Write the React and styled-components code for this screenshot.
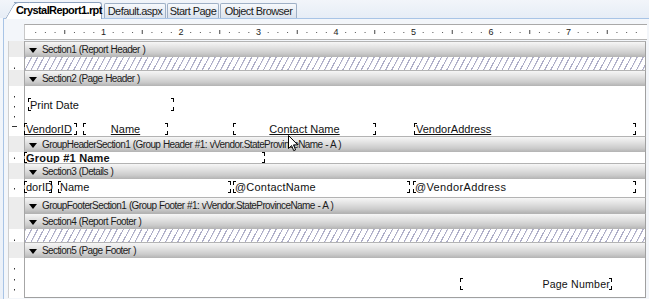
import React from 'react';
import styled, { createGlobalStyle } from 'styled-components';

const Global = createGlobalStyle`
  html, body { margin: 0; padding: 0; background: #eef2f8; overflow: hidden; }
  #root { width: 649px; height: 299px; }
`;

const Window = styled.div`
  position: relative;
  width: 649px;
  height: 299px;
  display: flex;
  flex-direction: column;
  overflow: hidden;
  background: linear-gradient(#f5f8fc, #eaf0f8);
  font-family: "Liberation Sans", Arial, sans-serif;
`;

const TabStrip = styled.div`
  flex: none;
  height: 18px;
  display: flex;
  align-items: flex-end;
  padding-left: 14px;
  gap: 1px;
  position: relative;
  z-index: 2;
  background: linear-gradient(#f2f5fa, #e6edf6);
`;

const ActiveTab = styled.div`
  position: relative;
  z-index: 1;
  width: ${p => p.$w}px;
  box-sizing: border-box;
  height: 17px;
  margin-bottom: -1px;
  margin-right: 1px;
  padding-left: 2px;
  background: #fff;
  border: 1px solid #8ea3bf;
  border-left: none;
  border-bottom: none;
  border-radius: 0 3px 0 0;
  font-weight: bold;
  font-size: 11px;
  letter-spacing: -0.6px;
  line-height: 15px;
  color: #000;
  white-space: nowrap;
  &::before {
    content: "";
    position: absolute;
    left: -9px;
    top: -1px;
    bottom: 0;
    width: 14px;
    background: #fff;
    border-left: 1px solid #8ea3bf;
    border-top: 1px solid #8ea3bf;
    border-top-left-radius: 4px;
    transform: skewX(-30deg);
    transform-origin: bottom left;
    z-index: -1;
  }
`;

const Tab = styled.div`
  width: ${p => p.$w}px;
  box-sizing: border-box;
  height: 15px;
  background: linear-gradient(#f7f9fc, #dae2ed);
  border: 1px solid #9fb0c6;
  border-bottom: none;
  border-radius: 2px 2px 0 0;
  font-size: 11px;
  letter-spacing: -0.55px;
  line-height: 14px;
  color: #1b1b1b;
  text-align: center;
  white-space: nowrap;
`;

const Frame = styled.div`
  flex: 1;
  min-height: 0;
  margin-left: 3px;
  border-top: 1px solid #a8c4e6;
  border-left: 1px solid #a8c4e6;
  background: #f3f6fa;
  display: flex;
  flex-direction: column;
`;

const TopRulerRow = styled.div`
  flex: none;
  height: 22px;
  display: flex;
  align-items: flex-start;
  padding-left: 20px;
`;

const RulerBox = styled.div`
  margin-top: 5px;
  width: 622px;
  height: 14px;
  box-sizing: content-box;
  background: #fff;
  border-top: 1px solid #a9a9a9;
  border-bottom: 1px solid #b5b5b5;
  border-left: 1px solid #c8c8c8;
  svg { display: block; }
`;

const Row = styled.div`
  flex: none;
  display: grid;
  grid-template-columns: 17px 621px;
  margin-left: 4px;
  height: ${p => p.$h}px;
`;

const RulerCell = styled.div`
  border-left: 1px solid #cfcfcf;
  border-right: 1px solid #a6a6a6;
  background: ${p => (p.$bar ? '#ececec' : '#fff')};
  svg { display: block; }
`;

const Bar = styled.div`
  position: relative;
  box-sizing: border-box;
  display: flex;
  align-items: center;
  gap: 5px;
  padding-left: 4px;
  border-top: 1px solid #b3b3b3;
  border-right: 1px solid #a0a0a0;
  background: linear-gradient(#f6f6f6 0%, #e3e3e3 35%, #cbcbcb 75%, #b3b3b3 100%);
  font-size: 10px;
  letter-spacing: -0.6px;
  word-spacing: 0.5px;
  color: #1c1c1c;
  white-space: nowrap;
`;

const Arrow = styled.span`
  width: 0;
  height: 0;
  border-left: 4px solid transparent;
  border-right: 4px solid transparent;
  border-top: 5px solid #000;
  margin-top: 1px;
`;

const Hatch = styled.div`
  border-right: 1px solid #a0a0a0;
  background: repeating-linear-gradient(118deg, #aeaec8 0px, #aeaec8 1px, #ffffff 1.3px, #ffffff 5.4px);
`;

const Canvas = styled.div`
  position: relative;
  background: #fff;
  border-right: 1px solid #a0a0a0;
  border-bottom: ${p => (p.$last ? '1px solid #a0a0a0' : 'none')};
`;

const FieldBox = styled.div`
  position: absolute;
  left: ${p => p.$x}px;
  top: ${p => p.$y}px;
  width: ${p => p.$w}px;
  height: ${p => p.$h}px;
  box-sizing: border-box;
  padding: 0 2px;
  display: flex;
  align-items: center;
  justify-content: ${p => (p.$align === 'center' ? 'center' : p.$align === 'right' ? 'flex-end' : 'flex-start')};
  font-size: ${p => p.$size || 11}px;
  font-weight: ${p => (p.$bold ? 'bold' : 'normal')};
  letter-spacing: ${p => p.$ls || 0}px;
  text-decoration: ${p => (p.$u ? 'underline' : 'none')};
  color: #111;
  white-space: nowrap;
`;

const Corner = styled.span`
  position: absolute;
  width: 2px;
  height: 3px;
  ${p => (p.$v === 't' ? 'top: 0;' : 'bottom: 0;')}
  ${p => (p.$h === 'l' ? 'left: 0;' : 'right: 0;')}
  ${p => (p.$v === 't' ? 'border-top: 1px solid #000;' : 'border-bottom: 1px solid #000;')}
  ${p => (p.$h === 'l' ? 'border-left: 1px solid #000;' : 'border-right: 1px solid #000;')}
`;

const CursorWrap = styled.div`
  position: absolute;
  left: 288px;
  top: 135px;
  z-index: 5;
  svg { display: block; }
`;

function Field({ f }) {
  return (
    <FieldBox $x={f.x} $y={f.y} $w={f.w} $h={f.h || 12} $align={f.align} $bold={f.bold} $u={f.u} $ls={f.ls} $size={f.size}>
      <Corner $v="t" $h="l" />
      <Corner $v="b" $h="l" />
      <Corner $v="t" $h="r" />
      <Corner $v="b" $h="r" />
      {f.text}
    </FieldBox>
  );
}

function TopRuler() {
  const step = 77.5 / 8;
  const items = [];
  for (let i = 1; i <= 64; i++) {
    const x = 1 + step * i;
    if (x > 620) break;
    if (i % 8 === 0) {
      items.push(
        <text key={i} x={x} y={10} fontSize="9" fontFamily="Liberation Sans, Arial, sans-serif" fill="#222" textAnchor="middle">
          {i / 8}
        </text>
      );
    } else if (i % 4 === 0) {
      items.push(<rect key={i} x={x - 0.5} y={5} width={1} height={4} fill="#444" />);
    } else {
      items.push(<rect key={i} x={x - 0.5} y={7} width={1} height={1} fill="#555" />);
    }
  }
  return (
    <svg width="622" height="14" viewBox="0 0 622 14">
      {items}
    </svg>
  );
}

function VMarks({ h, marks = [] }) {
  return (
    <svg width="15" height={h} viewBox={`0 0 15 ${h}`}>
      {marks.map((m, i) =>
        m.dash ? (
          <rect key={i} x={3} y={m.y} width={5} height={1} fill="#333" />
        ) : (
          <rect key={i} x={5} y={m.y} width={1} height={1.5} fill="#333" />
        )
      )}
    </svg>
  );
}

const rows = [
  { type: 'bar', label: 'Section1 (Report Header )' },
  { type: 'hatch', h: 13, marks: [{ y: 10.5 }] },
  { type: 'bar', label: 'Section2 (Page Header )' },
  {
    type: 'canvas', h: 50,
    marks: [{ y: 10 }, { y: 20 }, { y: 30 }, { y: 40, dash: true }],
    fields: [
      { x: 3, y: 12, w: 146, h: 13, text: 'Print Date' },
      { x: -1, y: 37, w: 53, text: 'VendorID', u: true },
      { x: 58, y: 37, w: 85, text: 'Name', u: true, align: 'center' },
      { x: 208, y: 37, w: 143, text: 'Contact Name', u: true, align: 'center' },
      { x: 389, y: 37, w: 222, text: 'VendorAddress', u: true },
    ],
  },
  { type: 'bar', label: 'GroupHeaderSection1 (Group Header #1: vVendor.StateProvinceName - A )' },
  {
    type: 'canvas', h: 11,
    marks: [{ y: 5.5 }],
    fields: [{ x: -1, y: 0, w: 241, h: 11, text: 'Group #1 Name', bold: true, ls: 0.2 }],
  },
  { type: 'bar', label: 'Section3 (Details )' },
  {
    type: 'canvas', h: 18,
    marks: [{ y: 9 }],
    fields: [
      { x: -1, y: 2, w: 28, text: 'dorID' },
      { x: 33, y: 2, w: 173, text: 'Name' },
      { x: 208, y: 2, w: 177, text: '@ContactName', ls: 0.2 },
      { x: 388, y: 2, w: 223, text: '@VendorAddress', ls: 0.35 },
    ],
  },
  { type: 'bar', label: 'GroupFooterSection1 (Group Footer #1: vVendor.StateProvinceName - A )' },
  { type: 'bar', label: 'Section4 (Report Footer )' },
  { type: 'hatch', h: 13, marks: [{ y: 10.5 }] },
  { type: 'bar', label: 'Section5 (Page Footer )' },
  {
    type: 'canvas', h: 40, last: true,
    marks: [{ y: 10 }, { y: 21 }, { y: 31 }],
    fields: [{ x: 435, y: 20, w: 152, text: 'Page Number', align: 'right', size: 10.6, ls: 0.2 }],
  },
];

function SectionRow({ r }) {
  const h = r.type === 'bar' ? 16 : r.h;
  return (
    <Row $h={h}>
      <RulerCell $bar={r.type === 'bar'}>
        {r.marks && <VMarks h={h} marks={r.marks} />}
      </RulerCell>
      {r.type === 'bar' && (
        <Bar>
          <Arrow />
          <span>{r.label}</span>
        </Bar>
      )}
      {r.type === 'hatch' && <Hatch />}
      {r.type === 'canvas' && (
        <Canvas $last={r.last}>
          {r.fields.map((f, i) => (
            <Field key={i} f={f} />
          ))}
        </Canvas>
      )}
    </Row>
  );
}

export default function App() {
  return (
    <>
      <Global />
      <Window>
        <TabStrip>
          <ActiveTab $w={88}>CrystalReport1.rpt</ActiveTab>
          <Tab $w={62}>Default.aspx</Tab>
          <Tab $w={52}>Start Page</Tab>
          <Tab $w={77}>Object Browser</Tab>
        </TabStrip>
        <Frame>
          <TopRulerRow>
            <RulerBox>
              <TopRuler />
            </RulerBox>
          </TopRulerRow>
          {rows.map((r, i) => (
            <SectionRow key={i} r={r} />
          ))}
        </Frame>
        <CursorWrap>
          <svg width="11" height="17" viewBox="0 0 11 17">
            <path d="M0.5 0.5 L0.5 13.5 L3.6 10.6 L5.7 15.6 L7.6 14.8 L5.5 9.9 L9.8 9.9 Z" fill="#fff" stroke="#000" strokeWidth="1" strokeLinejoin="miter" />
          </svg>
        </CursorWrap>
      </Window>
    </>
  );
}
